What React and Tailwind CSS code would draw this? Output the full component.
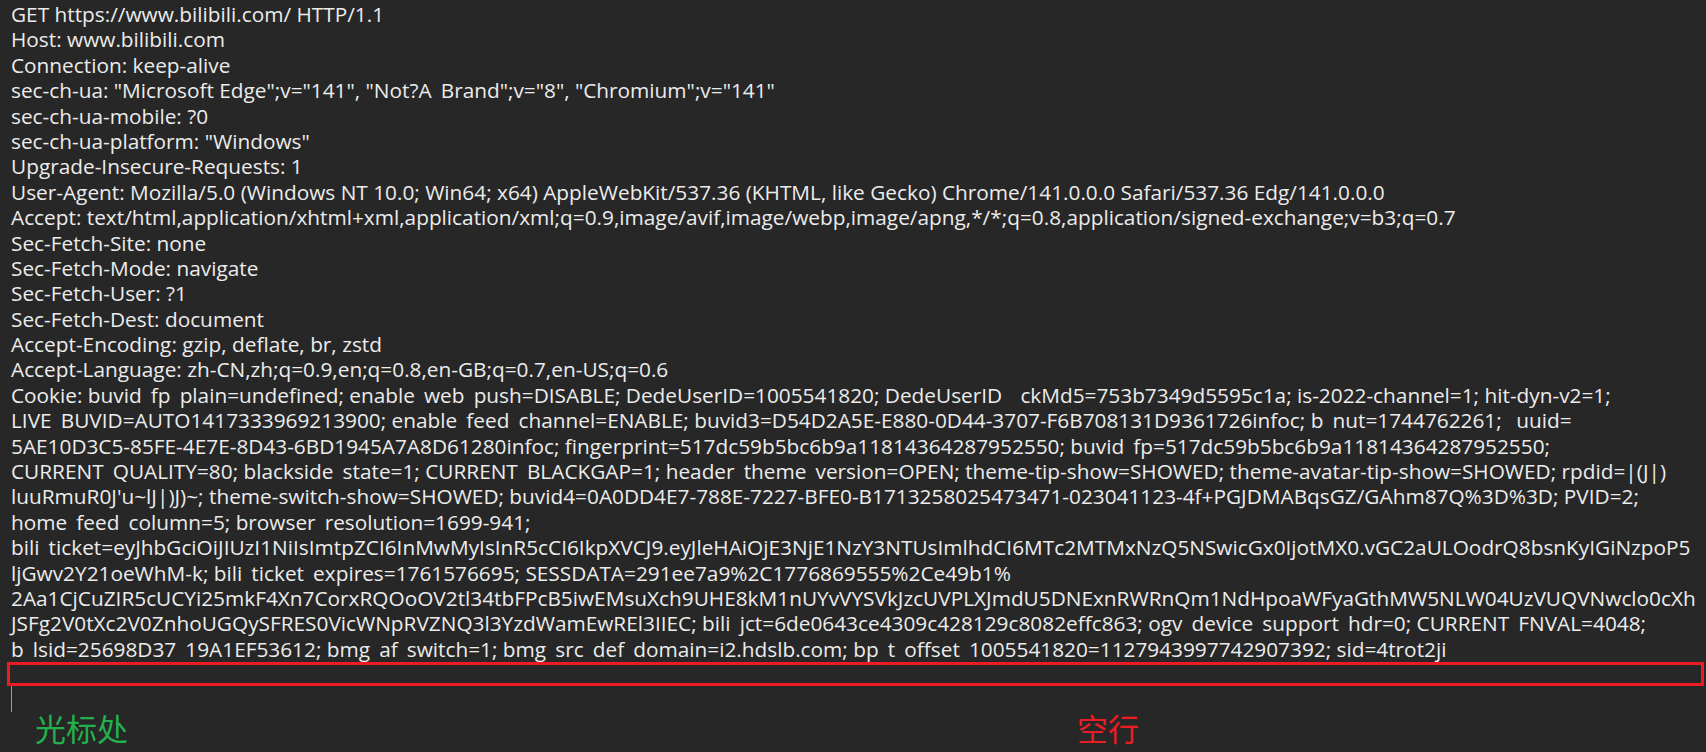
import React from 'react';

const LINES = [
  'GET https://www.bilibili.com/ HTTP/1.1',
  'Host: www.bilibili.com',
  'Connection: keep-alive',
  'sec-ch-ua: "Microsoft Edge";v="141", "Not?A_Brand";v="8", "Chromium";v="141"',
  'sec-ch-ua-mobile: ?0',
  'sec-ch-ua-platform: "Windows"',
  'Upgrade-Insecure-Requests: 1',
  'User-Agent: Mozilla/5.0 (Windows NT 10.0; Win64; x64) AppleWebKit/537.36 (KHTML, like Gecko) Chrome/141.0.0.0 Safari/537.36 Edg/141.0.0.0',
  'Accept: text/html,application/xhtml+xml,application/xml;q=0.9,image/avif,image/webp,image/apng,*/*;q=0.8,application/signed-exchange;v=b3;q=0.7',
  'Sec-Fetch-Site: none',
  'Sec-Fetch-Mode: navigate',
  'Sec-Fetch-User: ?1',
  'Sec-Fetch-Dest: document',
  'Accept-Encoding: gzip, deflate, br, zstd',
  'Accept-Language: zh-CN,zh;q=0.9,en;q=0.8,en-GB;q=0.7,en-US;q=0.6',
  'Cookie: buvid_fp_plain=undefined; enable_web_push=DISABLE; DedeUserID=1005541820; DedeUserID__ckMd5=753b7349d5595c1a; is-2022-channel=1; hit-dyn-v2=1;',
  'LIVE_BUVID=AUTO1417333969213900; enable_feed_channel=ENABLE; buvid3=D54D2A5E-E880-0D44-3707-F6B708131D9361726infoc; b_nut=1744762261; _uuid=',
  '5AE10D3C5-85FE-4E7E-8D43-6BD1945A7A8D61280infoc; fingerprint=517dc59b5bc6b9a11814364287952550; buvid_fp=517dc59b5bc6b9a11814364287952550;',
  'CURRENT_QUALITY=80; blackside_state=1; CURRENT_BLACKGAP=1; header_theme_version=OPEN; theme-tip-show=SHOWED; theme-avatar-tip-show=SHOWED; rpdid=|(J|)',
  "luuRmuR0J'u~lJ|)J)~; theme-switch-show=SHOWED; buvid4=0A0DD4E7-788E-7227-BFE0-B1713258025473471-023041123-4f+PGJDMABqsGZ/GAhm87Q%3D%3D; PVID=2;",
  'home_feed_column=5; browser_resolution=1699-941;',
  'bili_ticket=eyJhbGciOiJIUzI1NiIsImtpZCI6InMwMyIsInR5cCI6IkpXVCJ9.eyJleHAiOjE3NjE1NzY3NTUsImlhdCI6MTc2MTMxNzQ5NSwicGx0IjotMX0.vGC2aULOodrQ8bsnKyIGiNzpoP5',
  'ljGwv2Y21oeWhM-k; bili_ticket_expires=1761576695; SESSDATA=291ee7a9%2C1776869555%2Ce49b1%',
  '2Aa1CjCuZIR5cUCYi25mkF4Xn7CorxRQOoOV2tl34tbFPcB5iwEMsuXch9UHE8kM1nUYvVYSVkJzcUVPLXJmdU5DNExnRWRnQm1NdHpoaWFyaGthMW5NLW04UzVUQVNwclo0cXh',
  'JSFg2V0tXc2V0ZnhoUGQySFRES0VicWNpRVZNQ3l3YzdWamEwREl3IIEC; bili_jct=6de0643ce4309c428129c8082effc863; ogv_device_support_hdr=0; CURRENT_FNVAL=4048;',
  'b_lsid=25698D37_19A1EF53612; bmg_af_switch=1; bmg_src_def_domain=i2.hdslb.com; bp_t_offset_1005541820=1127943997742907392; sid=4trot2ji',
];

// underscores are clipped in the editor, keep the width but hide them
function Line({ text }) {
  const parts = text.split('_');
  return (
    <div className="h-[25.4px] leading-[25.4px] whitespace-pre">
      {parts.map((p, i) => (
        <React.Fragment key={i}>
          {i > 0 && <span className="text-transparent">_</span>}
          {p}
        </React.Fragment>
      ))}
    </div>
  );
}

export default function App() {
  return (
    <div className="w-[1706px] h-[752px] overflow-hidden bg-[#272727] text-[#ececec] font-['Open_Sans','Noto_Sans_CJK_SC',sans-serif] text-[20.8px]">
      <div className="flex flex-col pt-[2px] pl-[11px]">
        {LINES.map((l, i) => <Line key={i} text={l} />)}

        {/* the empty line, boxed in red */}
        <div className="-ml-[4px] mr-[2px] h-[24px] border-[3px] border-[#ed1c24]" />

        {/* caret */}
        <div className="w-px h-[26px] bg-[#9c9c9c]" />

        <div className="flex items-center h-[30px] font-['Noto_Sans_CJK_SC',sans-serif] text-[31px] leading-none">
          <span className="ml-[24px] text-[#22b14c]">光标处</span>
          <span className="ml-[949px] text-[#ed1c24]">空行</span>
        </div>
      </div>
    </div>
  );
}
